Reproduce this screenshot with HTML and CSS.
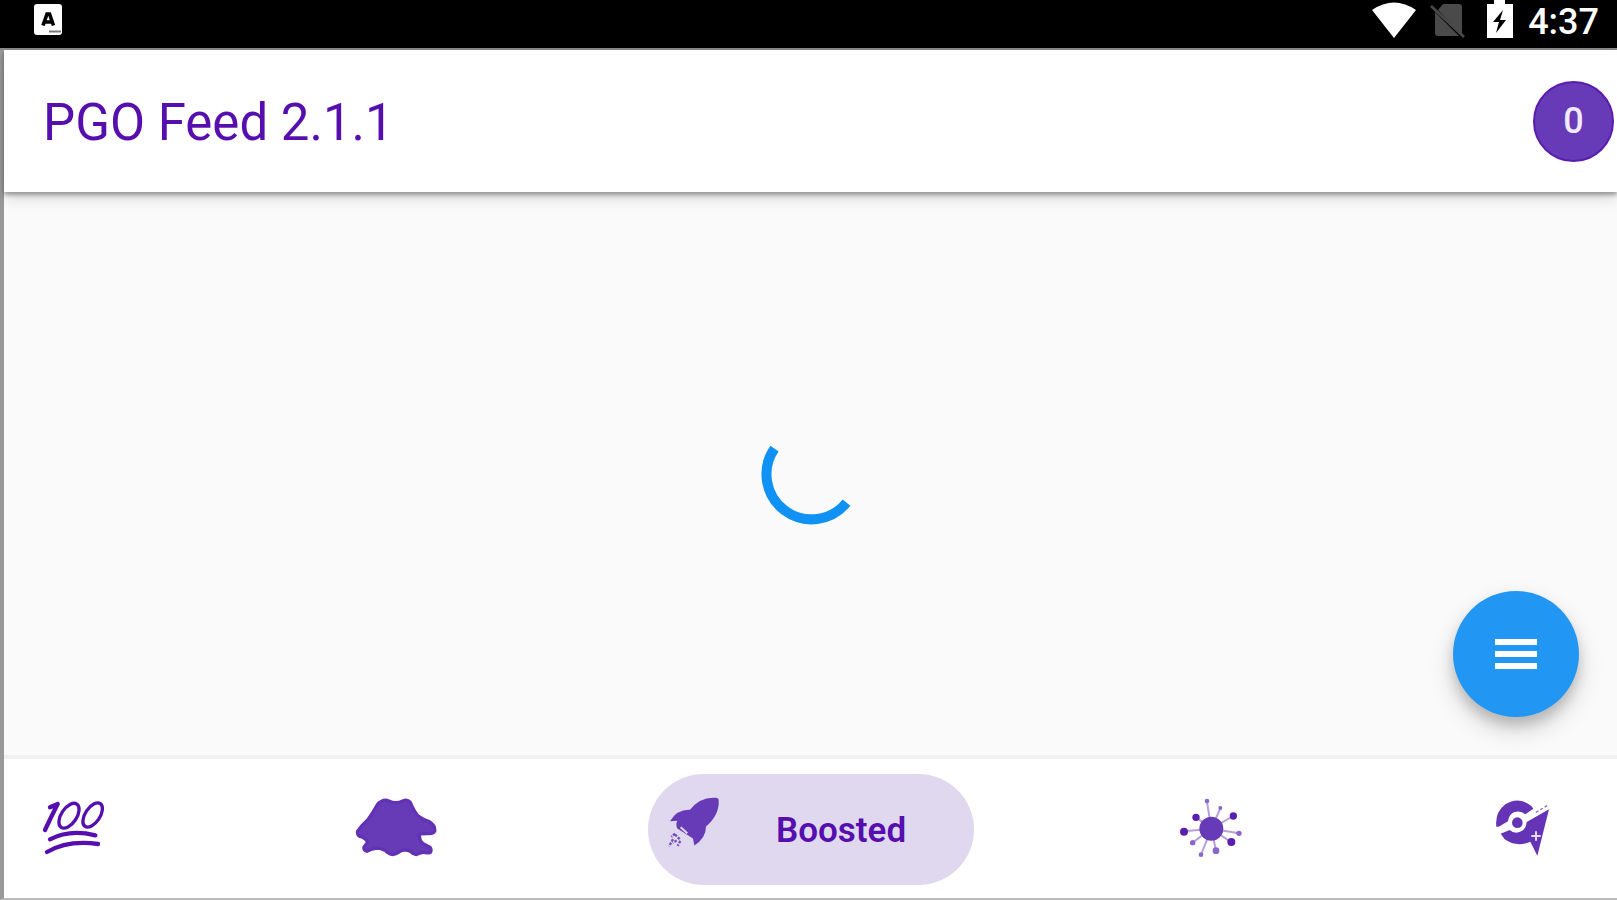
FILE: index.html
```html
<!DOCTYPE html>
<html lang="en">
<head>
<meta charset="utf-8">
<title>PGO Feed</title>
<link rel="stylesheet" href="styles.css">
</head>
<body>
<div class="screen">
  <div class="status">
    <svg class="status-app" viewBox="0 0 28 32" aria-hidden="true">
      <rect width="28" height="31" rx="3" fill="#fff"/>
      <path d="M9 21.500 13 10h2.500l4 11.500M10.500 18h7" fill="none" stroke="#000" stroke-width="3.600"/>
      <path d="M15 27.500h12" stroke="#777" stroke-width="2"/>
    </svg>
    <div class="status-right">
      <svg class="wifi" viewBox="0 0 44 40" aria-hidden="true">
        <path d="M0 10Q22-5 44 10L22 38Z" fill="#fff"/>
      </svg>
      <svg class="sim" viewBox="0 0 36 40" aria-hidden="true">
        <path d="M13 4h16q3 0 3 3v28L8 10ZM5 12l24 24H8q-3 0-3-3Z" fill="#4a4a4a"/>
        <path d="M1 6l33 31" stroke="#4a4a4a" stroke-width="2.500"/>
      </svg>
      <svg class="battery" viewBox="0 0 26 40" aria-hidden="true">
        <path d="M0 4h7V0h11v4h8v34H0Z" fill="#fff"/>
        <path d="M16 10 6 22h6l-3 11 10-13h-6Z" fill="#000"/>
      </svg>
      <time class="clock">4:37</time>
    </div>
  </div>
  <div class="app">
    <header class="bar">
      <h1 class="title">PGO Feed 2.1.1</h1>
      <button class="count" type="button">0</button>
    </header>
    <main class="content">
      <svg class="spinner" viewBox="0 0 102 102" role="img" aria-label="Loading">
        <path d="M14.500 24.700A45 45 0 0 0 86.500 78.600" fill="none" stroke="#0f92f3" stroke-width="10"/>
      </svg>
      <button class="fab" type="button" aria-label="Menu">
        <svg class="fab-icon" viewBox="0 0 42 30" aria-hidden="true">
          <path d="M0 3h42M0 15h42M0 27h42" stroke="#fff" stroke-width="6"/>
        </svg>
      </button>
    </main>
    <nav class="tabs">
      <button class="tab" type="button" aria-label="100">
        <svg class="tab-icon" viewBox="94 140 252 252" fill="none" stroke="#560fae" stroke-width="13" stroke-linecap="round" stroke-linejoin="round" aria-hidden="true">
          <path d="M151 201 174 191Q156 226 136 269"/>
          <ellipse cx="208" cy="226" rx="23" ry="42" transform="rotate(34 208 226)" stroke-width="10"/>
          <ellipse cx="279" cy="224" rx="22" ry="41" transform="rotate(34 279 224)" stroke-width="10"/>
          <path d="M151 297Q210 266 287 285M142 335Q205 298 295 311"/>
        </svg>
      </button>
      <button class="tab" type="button" aria-label="Ditto">
        <svg class="tab-icon" viewBox="36 20 260 252" aria-hidden="true">
          <path d="M125 60Q135 54 147 59 168 70 190 59 204 53 213 63 224 90 236 104 248 114 272 123 291 134 289 153 283 163 266 160L243 161Q238 178 252 191L274 202Q281 211 275 219 266 222 252 218L232 225Q222 224 213 215 195 207 180 216 160 232 143 219 132 206 110 205 93 206 80 215 68 214 70 202L81 188Q78 178 65 171 48 170 50 153 61 136 82 117 98 96 113 68 117 62 125 60Z" fill="#673ab7" stroke="#6332b4" stroke-width="10" stroke-linejoin="round"/>
        </svg>
      </button>
      <button class="tab tab-active" type="button" aria-current="page">
        <svg class="rocket" viewBox="104 134 162 206" aria-hidden="true">
          <path d="M254 142Q207 138 176 178 138 176 116 212L138 211Q132 222 138 234L185 264 189 285Q224 263 224 228 265 194 262 148Q260 142 254 142Z" fill="#673ab7"/>
          <path d="m148 230 20 18" stroke="#e0d8ef" stroke-width="6"/>
          <path d="m131 249-11 10M125 266l-12 22M136 270l-12 7M147 271l-8 15M131 252l14 14" stroke="#7950bd" stroke-width="7" stroke-dasharray="8 4"/>
        </svg>
        <span>Boosted</span>
      </button>
      <button class="tab" type="button" aria-label="Virus">
        <svg class="tab-icon" viewBox="2 5 252 252" aria-hidden="true">
          <path d="M126 130 113 50M126 130l27-61M126 130l66-38M126 130l83 14M126 130l58 40M126 130l14 66M126 130 96 206M126 130l-56 42M126 130 45 138M126 130 80 96" stroke="#b7a0da" stroke-width="6"/>
          <circle cx="126" cy="130" r="36" fill="#673ab7"/>
          <g fill="#5a1eb0">
            <circle cx="80" cy="96" r="11"/><circle cx="192" cy="92" r="11"/>
            <circle cx="186" cy="170" r="12"/><circle cx="44" cy="139" r="12"/>
          </g>
          <g fill="#8a67c6">
            <circle cx="113" cy="47" r="7"/><circle cx="153" cy="68" r="6"/>
            <circle cx="209" cy="144" r="8"/><circle cx="140" cy="196" r="10"/>
            <circle cx="95" cy="208" r="7"/><circle cx="70" cy="172" r="8"/>
          </g>
        </svg>
      </button>
      <button class="tab" type="button" aria-label="Nearby">
        <svg class="tab-icon" viewBox="2 5 252 252" aria-hidden="true">
          <path d="M51 124Q46 82 78 57 118 32 156 62L162 70 138 87Q125 75 105 80 88 87 86 108L58 124Z" fill="#6534b6"/>
          <path d="M209 72 174 211 153 169Q112 187 76 162L64 145 91 134Q109 150 131 135 142 124 142 110Z" fill="#6534b6"/>
          <circle cx="114" cy="112" r="16" fill="#6534b6"/>
          <path d="m170 81 35-21" stroke="#8e6bc8" stroke-width="4" stroke-dasharray="9 6"/>
          <path d="M170 138v28M156 152h28" stroke="#e4daf4" stroke-width="6"/>
        </svg>
      </button>
    </nav>
  </div>
</div>
</body>
</html>
```
FILE: styles.css
```css
* {
  box-sizing: border-box;
}

body {
  margin: 0;
  font-family: Roboto, sans-serif;
  color: #560fae;
}

button {
  margin: 0;
  padding: 0;
  border: 0;
  background: none;
  font: inherit;
  color: inherit;
}

svg {
  display: block;
  flex: none;
}

.screen {
  display: flex;
  flex-direction: column;
  min-height: 100vh;
}

.status {
  display: flex;
  justify-content: space-between;
  align-items: flex-start;
  height: 50px;
  padding: 0 18px 0 34px;
  background: #000;
  border-bottom: 2px solid #8c8c8c;
}

.status-app {
  width: 28px;
  height: 32px;
  margin-top: 4px;
}

.status-right {
  display: flex;
  align-items: flex-start;
}

.wifi {
  width: 44px;
  height: 40px;
  margin-right: 14px;
}

.sim {
  width: 36px;
  height: 40px;
  margin-right: 21px;
}

.battery {
  width: 26px;
  height: 40px;
  margin-right: 15px;
}

.clock {
  font-size: 36px;
  font-weight: 500;
  line-height: 44px;
  color: #fff;
}

.app {
  display: flex;
  flex: 1;
  flex-direction: column;
  border-left: 4px solid #999;
  border-bottom: 2px solid #bbb;
}

.bar {
  display: flex;
  justify-content: space-between;
  align-items: center;
  height: 142px;
  padding: 0 3px 0 39px;
  background: #fff;
  box-shadow: 0 3px 4px rgba(0, 0, 0, 0.32), 0 6px 14px rgba(0, 0, 0, 0.14);
  z-index: 1;
}

.title {
  margin: 0;
  padding-top: 3px;
  font-size: 51px;
  font-weight: 400;
  line-height: 60px;
}

.count {
  width: 81px;
  height: 81px;
  border: 2px solid #5a1cb0;
  border-radius: 50%;
  background: #673ab7;
  color: #f0eafa;
  font-size: 36px;
  font-weight: 500;
}

.content {
  position: relative;
  display: flex;
  flex: 1;
  align-items: center;
  justify-content: center;
  padding-top: 3px;
  background: #fafafa;
}

.spinner {
  width: 102px;
  height: 102px;
}

.fab {
  position: absolute;
  right: 38px;
  bottom: 38px;
  display: flex;
  align-items: center;
  justify-content: center;
  width: 126px;
  height: 126px;
  border-radius: 50%;
  background: #2196f3;
  box-shadow: 0 12px 24px rgba(0, 0, 0, 0.18), 0 8px 12px rgba(0, 0, 0, 0.14);
}

.fab-icon {
  width: 42px;
  height: 30px;
}

.tabs {
  position: relative;
  display: grid;
  grid-template-columns: 137fr 505fr auto 474fr 144fr;
  align-items: center;
  justify-items: center;
  height: 143px;
  padding: 1px 23px 0 0;
  background: #fff;
  border-top: 4px solid #f1f1f1;
}

.tab-icon {
  width: 84px;
  height: 84px;
}

.tab-active {
  display: flex;
  align-items: center;
  gap: 56px;
  height: 111px;
  padding: 0 68px 0 18px;
  border-radius: 56px;
  background: #e0d8ef;
  font-size: 35px;
  font-weight: 600;
}

.tab-active span {
  padding-top: 2px;
}

.rocket {
  width: 54px;
  height: 69px;
}
```
